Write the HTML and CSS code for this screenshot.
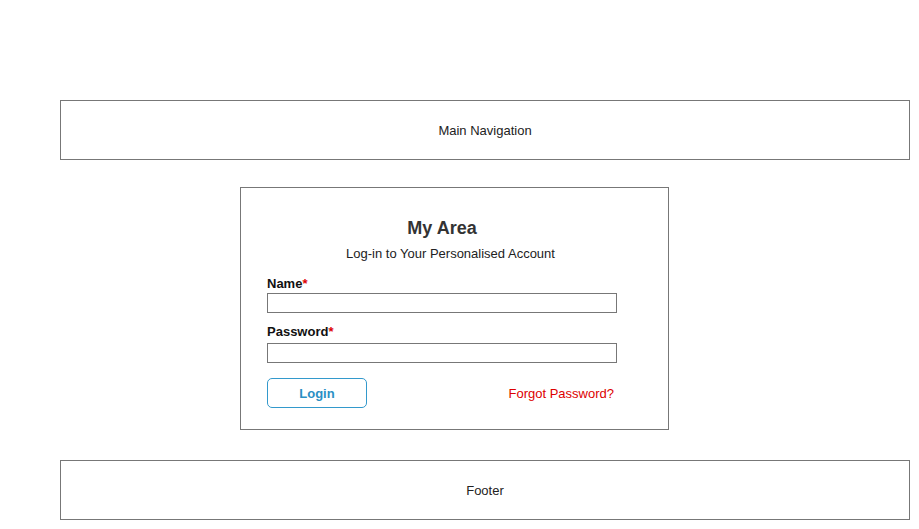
FILE: index.html
```html
<!DOCTYPE html>
<html>
<head>
<meta charset="utf-8">
<link rel="stylesheet" href="styles.css">
</head>
<body>
<div class="page">
  <div class="box nav">Main Navigation</div>
  <div class="card">
    <div class="inner">
      <h1 class="title">My Area</h1>
      <p class="subtitle">Log-in to Your Personalised Account</p>
      <label class="label">Name<span class="req">*</span></label>
      <div class="input"></div>
      <label class="label pw">Password<span class="req">*</span></label>
      <div class="input pw-input"></div>
      <div class="actions">
        <button class="btn">Login</button>
        <a class="forgot">Forgot Password?</a>
      </div>
    </div>
  </div>
  <div class="box footer">Footer</div>
</div>
</body>
</html>
```
FILE: styles.css
```css
html, body { margin: 0; padding: 0; background: #fff; }
body { font-family: "Liberation Sans", Arial, sans-serif; color: #222; }
.page { padding: 100px 0 0 60px; }
.box {
  box-sizing: border-box;
  width: 850px;
  height: 60px;
  border: 1px solid #777;
  display: flex;
  align-items: center;
  justify-content: center;
  font-size: 13px;
  line-height: 15px;
  padding-top: 1px;
  color: #222;
}
.card {
  box-sizing: border-box;
  width: 429px;
  height: 243px;
  margin: 27px 0 30px 180px;
  border: 1px solid #777;
  padding: 30px 0 0 26px;
}
.inner { width: 350px; display: flex; flex-direction: column; }
.title { margin: 0; font-size: 18px; line-height: 21px; font-weight: bold; text-align: center; color: #333; }
.subtitle { margin: 7px 0 0 0; padding-left: 17px; font-size: 13px; line-height: 15px; text-align: center; color: #222; }
.label { margin-top: 15px; font-size: 13px; line-height: 15px; font-weight: bold; color: #111; }
.label.pw { margin-top: 11px; }
.req { color: #d00; }
.input { box-sizing: border-box; width: 350px; height: 20px; border: 1px solid #777; margin-top: 2px; }
.pw-input { margin-top: 4px; }
.actions { margin-top: 15px; display: flex; align-items: center; justify-content: space-between; }
.btn {
  box-sizing: border-box;
  width: 100px; height: 30px;
  border: 1px solid #3399cc;
  border-radius: 5px;
  background: #fff;
  color: #2a8fc4;
  font-family: "Liberation Sans", Arial, sans-serif;
  font-size: 13px;
  font-weight: bold;
  padding: 0;
}
.forgot { color: #d00; font-size: 13px; margin-right: 3px; }
```
